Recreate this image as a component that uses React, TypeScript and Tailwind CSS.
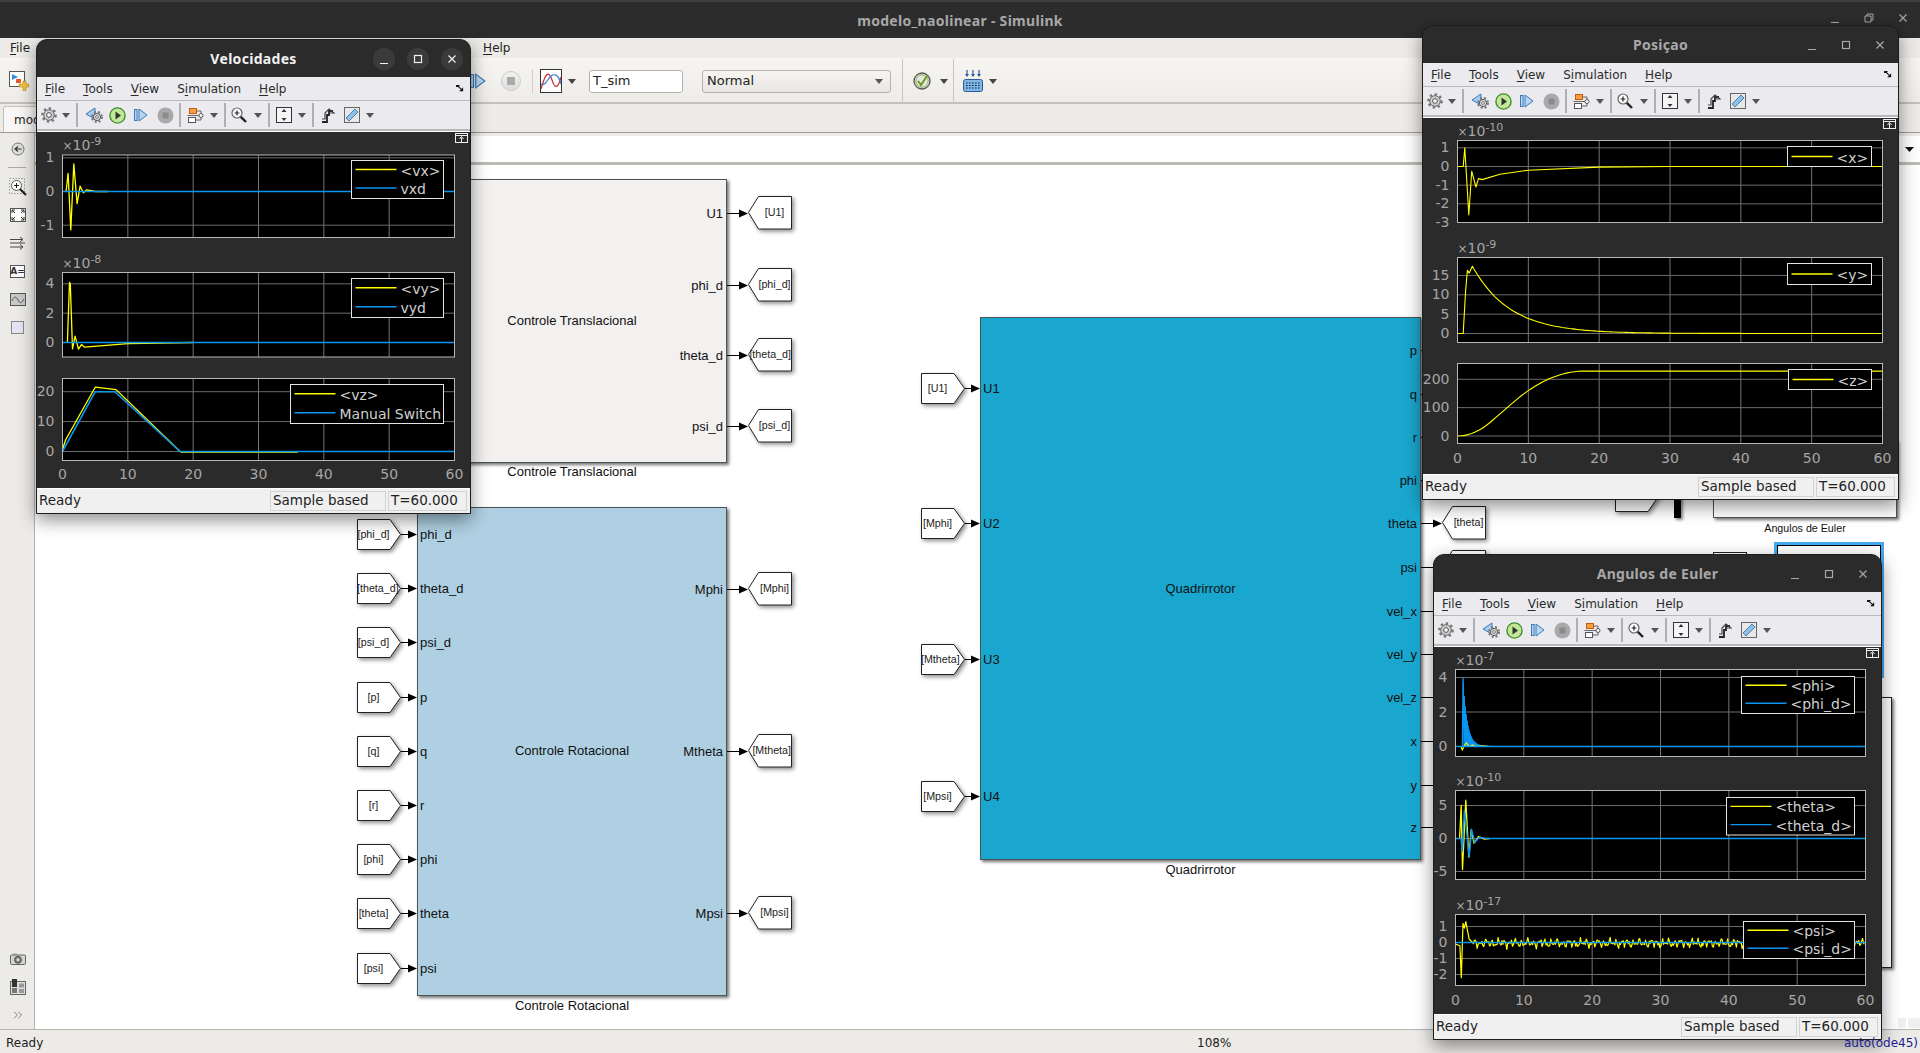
import React from "react";
import { ChevronsRight } from "lucide-react";

type Pt = [number, number];
type Series = { color: string; pts: Pt[]; w?: number };
type Legend = { x: number; y: number; w: number; h: number; lineW: number; labels: string[] };
type Axes = {
  top: number;
  bottom: number;
  y0: number;
  k: number;
  ticks: number[];
  exp?: string;
  series: Series[];
  legend: Legend;
};

const Y = "#ffff00";
const B = "#0a96f0";
const flat: Pt[] = [[0, 0], [60, 0]];

// ---------- curve data ----------
const range = (a: number, b: number, s: number) => {
  const out: number[] = [];
  for (let t = a; t <= b; t += s) out.push(t);
  return out;
};

const posY: Pt[] = [
  [0, 0], [0.8, 0], [1.15, 11], [1.4, 16.3], [1.65, 15.6], [2.1, 17.4],
  ...range(2.3, 60, 0.5).map((t): Pt => [t, 17.4 * Math.exp(-(t - 2.1) / 5.27)])
];

const posZ: Pt[] = range(0, 60, 0.5).map((t): Pt => {
  let v = 229;
  if (t <= 5) v = 2.26 * t * t;
  else if (t <= 8) v = 56.5 + 21.6 * (t - 5);
  else if (t <= 18) v = 121.3 + 21.6 * (t - 8) - 1.08 * (t - 8) * (t - 8);
  return [t, v];
});

const phiD: Pt[] = [
  [0, 0], [1, 0], [1.1, 4],
  ...range(1.16, 5.6, 0.07).map((t, i): Pt => [t, i % 2 ? 0 : 4 * Math.exp(-(t - 1.1) / 0.62)]),
  [6, 0]
];

const psiNoise: Pt[] = [
  [0, -0.1], [0.65, -0.2], [0.85, -2.2], [1, -0.2], [1.1, 1.2], [1.3, 0.9], [1.5, 1.3], [2, 0.2], [2.5, 0],
  ...range(2.6, 60, 0.14).map((t): Pt => [
    t,
    0.14 * Math.sin(t * 7.3) + 0.12 * Math.sin(t * 13.1 + 1) + 0.08 * Math.sin(t * 23 + 2) + 0.07 * Math.sin(t * 3.1) - 0.04
  ])
];

// ---------- scope plots ----------
const Plot = ({ a, left, right }: { a: Axes; left: number; right: number }) => {
  const sx = (t: number) => left + (t / 60) * (right - left);
  const sy = (v: number) => a.y0 - v * a.k;
  const l = a.legend;
  return (
    <g>
      <rect x={left} y={a.top} width={right - left} height={a.bottom - a.top} fill="#000" />
      {[10, 20, 30, 40, 50].map(t => (
        <line key={t} x1={sx(t)} x2={sx(t)} y1={a.top} y2={a.bottom} stroke="#747474" />
      ))}
      {a.ticks.map(v => (
        <g key={v}>
          <line x1={left} x2={right} y1={sy(v)} y2={sy(v)} stroke="#6c6c6c" />
          <text x={left - 8} y={sy(v) + 4.5} textAnchor="end" fontSize={14} className="fill-[#a6a6a6]">{v}</text>
        </g>
      ))}
      {a.series.map((s, i) => (
        <polyline
          key={i}
          points={s.pts.map(([t, v]) => `${sx(t).toFixed(1)},${sy(v).toFixed(1)}`).join(" ")}
          fill="none"
          stroke={s.color}
          strokeWidth={s.w ?? 1.3}
          strokeLinejoin="round"
        />
      ))}
      <rect x={left} y={a.top} width={right - left} height={a.bottom - a.top} fill="none" stroke="#b8b8b8" />
      {a.exp && (
        <text x={left} y={a.top - 5} fontSize={14} className="fill-[#a6a6a6]">
          <tspan fontSize={12}>×</tspan>10<tspan dy={-5} fontSize={11}>{a.exp}</tspan>
        </text>
      )}
      <rect x={l.x} y={l.y} width={l.w} height={l.h} fill="#000" stroke="#e4e4e4" />
      {l.labels.map((t, i) => {
        const rowH = l.h / l.labels.length;
        const cy = l.y + rowH * (i + 0.5) - (l.labels.length > 1 ? (i === 0 ? 0.5 : 1) : 0);
        return (
          <g key={t}>
            <line x1={l.x + 4} x2={l.x + 4 + l.lineW} y1={cy} y2={cy} stroke={i ? B : Y} strokeWidth={1.3} />
            <text x={l.x + 4 + l.lineW + 4} y={cy + 6} fontSize={14} className="fill-[#cfcfcf]">{t}</text>
          </g>
        );
      })}
    </g>
  );
};

// ---------- small icons ----------
const Caret = ({ dark }: { dark?: boolean }) => (
  <svg width="8" height="5" viewBox="0 0 8 5" className="shrink-0">
    <polygon points="0,0 8,0 4,5" fill={dark ? "#444" : "#555"} />
  </svg>
);

const GearIco = () => (
  <svg width="16" height="16" viewBox="0 0 16 16">
    <circle cx="8" cy="8" r="6.6" fill="none" stroke="#777" strokeWidth="2.4" strokeDasharray="2.4 2.7" />
    <circle cx="8" cy="8" r="5.3" fill="#cfcfcf" stroke="#666" />
    <circle cx="8" cy="8" r="2.4" fill="#f5f5f5" stroke="#555" />
  </svg>
);
const BackGearIco = () => (
  <svg width="18" height="16" viewBox="0 0 18 16">
    <polygon points="1,7 10,1 10,12" fill="#a8cdf0" stroke="#3a78b8" />
    <circle cx="12" cy="10" r="5" fill="none" stroke="#777" strokeWidth="2" strokeDasharray="2 2" />
    <circle cx="12" cy="10" r="3.6" fill="#ddd" stroke="#555" />
    <circle cx="12" cy="10" r="1.4" fill="#fff" stroke="#444" strokeWidth=".7" />
  </svg>
);
const PlayIco = () => (
  <svg width="17" height="17" viewBox="0 0 17 17">
    <circle cx="8.5" cy="8.5" r="7.6" fill="#c4e69a" stroke="#3f8f2a" strokeWidth="1.4" />
    <polygon points="6.5,4.6 12,8.5 6.5,12.4" fill="#2a3a2a" />
  </svg>
);
const StepIco = () => (
  <svg width="14" height="14" viewBox="0 0 14 14">
    <rect x="0.5" y="1.5" width="2.6" height="11" fill="#b6d6f2" stroke="#3a78b8" />
    <polygon points="5,1 13,7 5,13" fill="#b6d6f2" stroke="#3a78b8" />
  </svg>
);
const StopIco = () => (
  <svg width="17" height="17" viewBox="0 0 17 17">
    <circle cx="8.5" cy="8.5" r="8" fill="#a9a9a9" />
    <rect x="5.5" y="5.5" width="6" height="6" fill="#8b8b8b" />
  </svg>
);
const BlockIco = () => (
  <svg width="17" height="15" viewBox="0 0 17 15">
    <rect x="2.5" y="0.5" width="7" height="5" fill="#f5a040" stroke="#c85a10" />
    <rect x="1.5" y="9.5" width="7" height="5" fill="#fff" stroke="#555" />
    <circle cx="14" cy="7.5" r="2" fill="#fff" stroke="#555" />
    <path d="M9.5 3 H14 V5.5 M12 7.5 H0.5 M8.5 12 H14 V9.5" fill="none" stroke="#666" />
  </svg>
);
const ZoomIco = () => (
  <svg width="16" height="16" viewBox="0 0 16 16">
    <circle cx="6" cy="6" r="5" fill="#fff" stroke="#666" strokeWidth="1.2" />
    <path d="M3.6 6 H8.4 M6 3.6 V8.4" stroke="#222" strokeWidth="1.2" />
    <path d="M9.8 9.8 L15 15" stroke="#222" strokeWidth="2.4" />
  </svg>
);
const AutoIco = () => (
  <svg width="16" height="16" viewBox="0 0 16 16">
    <rect x="0.5" y="0.5" width="15" height="15" fill="#f4f4f4" stroke="#333" />
    <path d="M8 2 L5.5 5 H10.5 Z M8 14 L5.5 11 H10.5 Z" fill="#333" />
  </svg>
);
const StyleIco = () => (
  <svg width="14" height="15" viewBox="0 0 14 15">
    <path d="M1 14 H6 V7 L8 7 V3 H12" fill="none" stroke="#222" strokeWidth="1.8" />
    <path d="M1 11 H4 V5 L8 1 L13 5 H9" fill="none" stroke="#444" strokeWidth="1.2" />
  </svg>
);
const RulerIco = () => (
  <svg width="16" height="16" viewBox="0 0 16 16">
    <rect x="0.5" y="0.5" width="15" height="15" fill="#e8e8e8" stroke="#666" />
    <path d="M2 11 L11 2 L14 5 L5 14 Z" fill="#8fc0e8" stroke="#4a80b0" />
  </svg>
);
const DockIco = () => (
  <svg width="8" height="7" viewBox="0 0 10 9">
    <path d="M0 2 L1 0 H4 L3 2 Z M2 1 L8 7" stroke="#111" strokeWidth="1.4" fill="#111" />
    <path d="M9 3 V8 H4 Z" fill="#111" />
  </svg>
);

const VSep = () => <div className="h-[24px] w-[2px] shrink-0 bg-[#b0b0b4]" />;

const ScopeToolbar = () => (
  <div className="flex h-[30px] shrink-0 items-center border-b-2 border-[#b9b9bd] bg-[#eaeaef] [&>div]:flex [&>div]:shrink-0 [&>div]:justify-center">
    <div className="w-[23px]"><GearIco /></div>
    <div className="w-[12px]"><Caret /></div>
    <div className="w-[9px]"><VSep /></div>
    <div className="w-[26px]"><BackGearIco /></div>
    <div className="w-[20px]"><PlayIco /></div>
    <div className="w-[28px]"><StepIco /></div>
    <div className="w-[20px]"><StopIco /></div>
    <div className="w-[10px]"><VSep /></div>
    <div className="w-[20px]"><BlockIco /></div>
    <div className="w-[18px]"><Caret /></div>
    <div className="w-[3px]"><VSep /></div>
    <div className="w-[26px]"><ZoomIco /></div>
    <div className="w-[12px]"><Caret /></div>
    <div className="w-[9px]"><VSep /></div>
    <div className="w-[22px]"><AutoIco /></div>
    <div className="w-[14px]"><Caret /></div>
    <div className="w-[7px]"><VSep /></div>
    <div className="w-[24px]"><StyleIco /></div>
    <div className="w-[24px]"><RulerIco /></div>
    <div className="w-[12px]"><Caret /></div>
  </div>
);

const Mn = ({ c, rest, pre }: { c: string; rest: string; pre?: string }) => (
  <span>{pre}<span className="underline underline-offset-2">{c}</span>{rest}</span>
);

const WinButtons = ({ active }: { active?: boolean }) => {
  const stroke = active ? "#f0f0f0" : "#a8a8a8";
  const cls = active
    ? "flex h-[22px] w-[22px] items-center justify-center rounded-full bg-[#3b3b3b]"
    : "flex h-[22px] w-[22px] items-center justify-center";
  return (
    <div className="absolute right-[7px] top-[8px] flex gap-[12px]">
      <div className={cls}>
        <svg width="10" height="10" viewBox="0 0 10 10"><path d="M1 9.5 H9" stroke={stroke} strokeWidth="1.2" /></svg>
      </div>
      <div className={cls}>
        <svg width="10" height="10" viewBox="0 0 10 10"><rect x="1.5" y="1.5" width="7" height="7" fill="none" stroke={stroke} strokeWidth="1.2" /></svg>
      </div>
      <div className={cls}>
        <svg width="10" height="10" viewBox="0 0 10 10"><path d="M1.5 1.5 L8.5 8.5 M8.5 1.5 L1.5 8.5" stroke={stroke} strokeWidth="1.2" /></svg>
      </div>
    </div>
  );
};

const ScopeWindow = ({ title, x, y, w, h, active, left, right, axes, tickY }: {
  title: string; x: number; y: number; w: number; h: number; active?: boolean;
  left: number; right: number; axes: Axes[]; tickY: number;
}) => {
  const plotTop = y + 93;
  const plotH = h - 93 - 26;
  return (
    <div
      className="absolute z-10 flex flex-col overflow-hidden rounded-t-[11px] border border-[#1c1c1c] bg-[#2b2b2b] font-['DejaVu_Sans',sans-serif] shadow-[0_6px_18px_rgba(0,0,0,0.45)]"
      style={{ left: x, top: y, width: w, height: h }}
    >
      <div className="relative flex h-[37px] shrink-0 items-center justify-center">
        <span className={`font-['Noto_Sans',sans-serif] text-[14px] font-bold tracking-[0.3px] ${active ? "text-[#f2f2f2]" : "text-[#a8a8a8]"}`}>{title}</span>
        <WinButtons active={active} />
      </div>
      <div className="flex h-[24px] shrink-0 items-center gap-[18px] border-b border-[#b9b9bd] bg-[#eaeaef] px-[8px] text-[12px] text-[#2a2a2a]">
        <Mn c="F" rest="ile" />
        <Mn c="T" rest="ools" />
        <Mn c="V" rest="iew" />
        <Mn pre="S" c="i" rest="mulation" />
        <Mn c="H" rest="elp" />
        <div className="ml-auto mr-[-2px]"><DockIco /></div>
      </div>
      <ScopeToolbar />
      <div className="h-[1px] shrink-0 bg-white" />
      <svg
        width={w - 2}
        height={plotH}
        viewBox={`${x + 1} ${plotTop} ${w - 2} ${plotH}`}
        className="shrink-0 font-['DejaVu_Sans',sans-serif]"
      >
        {axes.map((a, i) => <Plot key={i} a={a} left={left} right={right} />)}
        {[0, 10, 20, 30, 40, 50, 60].map(t => (
          <text
            key={t}
            x={left + (t / 60) * (right - left)}
            y={tickY + 5}
            textAnchor="middle"
            fontSize={14}
            className="fill-[#a6a6a6]"
          >{t}</text>
        ))}
        <g transform={`translate(${x + w - 16} ${plotTop + 1})`}>
          <rect x="0.5" y="0.5" width="12" height="9" fill="none" stroke="#eee" />
          <path d="M0.5 2.5 H12.5 M6.5 9 V4.5 M4.5 6 L6.5 3.5 L8.5 6" fill="none" stroke="#eee" />
        </g>
      </svg>
      <div className="flex min-h-0 flex-1 items-center justify-between border-t border-white bg-[#f0f0f0] pl-[2px] pr-[3px] text-[13.5px] text-[#222]">
        <span className="pb-[2px]">Ready</span>
        <div className="flex gap-[2px]">
          <div className="flex h-[20px] w-[116px] items-center border border-[#d2d2d2] pb-[2px] pl-[2px]">Sample based</div>
          <div className="flex h-[20px] w-[79px] items-center border border-[#d2d2d2] pb-[2px] pl-[2px]">T=60.000</div>
        </div>
      </div>
    </div>
  );
};

// ---------- diagram ----------
const OX = 35;
const OY = 165;

const Block = ({ x, y, w, h, color, name, nameY, inPorts = [], outPorts = [], label, labelY, small }: {
  x: number; y: number; w: number; h: number; color: string; name: string; nameY: number;
  inPorts?: [string, number][]; outPorts?: [string, number][]; label: string; labelY: number; small?: boolean;
}) => (
  <>
    <div
      className="absolute border border-[#4b5558] text-[13px] text-[#111] shadow-[2px_2px_3px_rgba(0,0,0,0.55)]"
      style={{ left: x - OX, top: y - OY, width: w, height: h, backgroundColor: color }}
    >
      <span className="absolute left-0 right-0 text-center leading-[16px]" style={{ top: nameY - y - 8 }}>{name}</span>
      {inPorts.map(([t, py]) => (
        <span key={t} className="absolute left-[2px] leading-[16px]" style={{ top: py - y - 8 }}>{t}</span>
      ))}
      {outPorts.map(([t, py]) => (
        <span key={t} className="absolute right-[3px] leading-[16px]" style={{ top: py - y - 8 }}>{t}</span>
      ))}
    </div>
    <span
      className={`absolute text-center leading-[16px] text-[#111] ${small ? "text-[10.7px]" : "text-[13px]"}`}
      style={{ left: x - OX, top: labelY - OY - 8, width: w }}
    >{label}</span>
  </>
);

const TagIn = ({ x, cy, text }: { x: number; cy: number; text: string }) => (
  <div className="absolute h-[31px] w-[44px]" style={{ left: x - OX, top: cy - OY - 15 }}>
    <svg width="46" height="33" viewBox="0 0 46 33" className="absolute left-0 top-0 drop-shadow-[2px_2px_2px_rgba(0,0,0,0.45)]">
      <polygon points="0.5,0.5 33,0.5 43.5,15.5 33,30.5 0.5,30.5" fill="#fff" stroke="#222" />
    </svg>
    <span className="absolute left-0 top-0 flex h-[30px] w-[33px] items-center whitespace-nowrap text-[10.7px] text-[#222] [justify-content:safe_center]">{text}</span>
  </div>
);

const TagOut = ({ x, cy, text }: { x: number; cy: number; text: string }) => (
  <div className="absolute h-[33px] w-[44px]" style={{ left: x - OX, top: cy - OY - 17 }}>
    <svg width="46" height="35" viewBox="0 0 46 35" className="absolute left-0 top-0 drop-shadow-[2px_2px_2px_rgba(0,0,0,0.45)]">
      <polygon points="0.5,16.5 10.5,0.5 43.5,0.5 43.5,33 10.5,33" fill="#fff" stroke="#222" />
    </svg>
    <span className={`absolute left-[10px] top-0 flex h-[32px] w-[33px] items-center whitespace-nowrap text-[10.7px] text-[#222] ${text.length > 7 ? "justify-end" : "justify-center"}`}>{text}</span>
  </div>
);

const rotY = [534, 588, 642, 697, 751, 805, 859, 913, 968];
const rotIn = ["phi_d", "theta_d", "psi_d", "p", "q", "r", "phi", "theta", "psi"];
const transOut: [string, string, number][] = [["U1", "[U1]", 213], ["phi_d", "[phi_d]", 285], ["theta_d", "[theta_d]", 355], ["psi_d", "[psi_d]", 426]];
const rotOut: [string, string, number][] = [["Mphi", "[Mphi]", 589], ["Mtheta", "[Mtheta]", 751], ["Mpsi", "[Mpsi]", 913]];
const quadIn: [string, string, number][] = [["U1", "[U1]", 388], ["U2", "[Mphi]", 523], ["U3", "[Mtheta]", 659], ["U4", "[Mpsi]", 796]];
const quadOut: [string, number][] = [["p", 350], ["q", 394], ["r", 437], ["phi", 480], ["theta", 523], ["psi", 567], ["vel_x", 611], ["vel_y", 654], ["vel_z", 697], ["x", 741], ["y", 785], ["z", 827]];

const Wire = ({ x1, x2, y }: { x1: number; x2: number; y: number }) => (
  <g>
    <line x1={x1} x2={x2 - 6} y1={y + 0.5} y2={y + 0.5} stroke="#000" />
    <polygon points={`${x2 - 9},${y - 3.5} ${x2},${y + 0.5} ${x2 - 9},${y + 4.5}`} fill="#000" />
  </g>
);

const Diagram = () => (
  <div className="relative min-h-0 flex-1 overflow-hidden bg-white font-['Liberation_Sans',sans-serif]">
    <svg width="1885" height="864" viewBox={`${OX} ${OY} 1885 864`} className="absolute left-0 top-0">
      {rotY.map(y => <Wire key={y} x1={401} x2={417} y={y} />)}
      {transOut.map(([, , y]) => <Wire key={y} x1={727} x2={748} y={y} />)}
      {rotOut.map(([, , y]) => <Wire key={y} x1={727} x2={748} y={y} />)}
      {quadIn.map(([, , y]) => <Wire key={y} x1={963} x2={980} y={y} />)}
      <Wire x1={1421} x2={1442} y={523} />
      {quadOut.filter(([t]) => t !== "theta").map(([t, y]) => (
        <line key={t} x1={1421} x2={1436} y1={y + 0.5} y2={y + 0.5} stroke="#000" />
      ))}
      <Wire x1={1421} x2={1442} y={567} />
    </svg>

    <Block
      x={417} y={179} w={310} h={284} color="#f3f0f0"
      name="Controle Translacional" nameY={320}
      outPorts={transOut.map(([t, , y]): [string, number] => [t, y])}
      label="Controle Translacional" labelY={472}
    />
    {transOut.map(([, t, y]) => <TagOut key={t} x={748} cy={y} text={t} />)}

    <Block
      x={417} y={507} w={310} h={489} color="#aed0e2"
      name="Controle Rotacional" nameY={750}
      inPorts={rotIn.map((t, i): [string, number] => [t, rotY[i]])}
      outPorts={rotOut.map(([t, , y]): [string, number] => [t, y])}
      label="Controle Rotacional" labelY={1006}
    />
    {rotIn.map((t, i) => <TagIn key={t} x={357} cy={rotY[i]} text={`[${t}]`} />)}
    {rotOut.map(([, t, y]) => <TagOut key={t} x={748} cy={y} text={t} />)}

    <Block
      x={980} y={317} w={441} h={543} color="#1aa7cf"
      name="Quadrirrotor" nameY={588}
      inPorts={quadIn.map(([t, , y]): [string, number] => [t, y])}
      outPorts={quadOut}
      label="Quadrirrotor" labelY={870}
    />
    {quadIn.map(([, t, y]) => <TagIn key={t} x={921} cy={y} text={t} />)}
    <TagOut x={1442} cy={523} text="[theta]" />
    <TagOut x={1442} cy={567} text="[psi]" />

    {/* blocks peeking out from behind the scopes */}
    <TagIn x={1615} cy={496} text="" />
    <div className="absolute left-[1639px] top-[310px] h-[43px] w-[7px] bg-black shadow-[2px_2px_3px_rgba(0,0,0,0.45)]" />
    <Block x={1713} y={440} w={184} h={78} color="#fff" name="" nameY={470} label="Angulos de Euler" labelY={528} small />
    <div className="absolute left-[1678px] top-[387px] h-[40px] w-[34px] border border-[#222] bg-white" />
    <div className="absolute left-[1739px] top-[377px] h-[136px] w-[110px] border-[3px] border-[#45aaf2] bg-white outline outline-1 -outline-offset-4 outline-black" />
    <div className="absolute left-[1650px] top-[532px] h-[271px] w-[207px] border border-[#222] bg-white shadow-[2px_2px_3px_rgba(0,0,0,0.55)]" />
    <div className="absolute bottom-[1px] right-0 flex gap-[2px]">
      <div className="h-[10px] w-[8px] bg-[#efefef]" />
      <div className="h-[10px] w-[12px] bg-[#efefef]" />
    </div>
  </div>
);

// ---------- main window chrome ----------
const PalIcon = ({ children }: { children: React.ReactNode }) => (
  <div className="flex h-[28px] w-[35px] items-center justify-center">{children}</div>
);

const Palette = () => (
  <div className="flex w-[35px] shrink-0 flex-col border-r border-[#b5b3ae] bg-[#edebe7] pt-[2px]">
    <PalIcon>
      <svg width="14" height="14" viewBox="0 0 14 14">
        <circle cx="7" cy="7" r="6" fill="#ddd" stroke="#777" />
        <path d="M10.5 7 H5 M7 4.5 L4 7 L7 9.5" fill="none" stroke="#333" strokeWidth="1.2" />
      </svg>
    </PalIcon>
    <div className="h-[10px] pt-[4px]"><div className="mx-[8px] h-[1px] bg-[#a8a8a8]" /></div>
    <PalIcon>
      <svg width="18" height="18" viewBox="0 0 18 18">
        <rect x="0.5" y="0.5" width="15" height="15" fill="none" stroke="#999" strokeDasharray="1.5 1.5" />
        <circle cx="7.5" cy="7.5" r="5" fill="#fff" stroke="#555" />
        <path d="M5 7.5 H10 M7.5 5 V10" stroke="#222" />
        <path d="M11 11 L17 17" stroke="#222" strokeWidth="2.2" />
      </svg>
    </PalIcon>
    <PalIcon>
      <svg width="16" height="14" viewBox="0 0 16 14">
        <rect x="0.5" y="0.5" width="15" height="13" fill="#fff" stroke="#555" />
        <path d="M2 2 L5 5 M2 2 V5 M2 2 H5 M14 2 L11 5 M14 2 V5 M14 2 H11 M2 12 L5 9 M2 12 V9 M2 12 H5 M14 12 L11 9 M14 12 V9 M14 12 H11" stroke="#333" fill="none" />
      </svg>
    </PalIcon>
    <PalIcon>
      <svg width="16" height="14" viewBox="0 0 16 14">
        <path d="M0 3.5 H12 M0 7 H15 M0 11 H12 M10 1 L13 3.5 L10 6 M10 8.5 L13 11 L10 13.5" fill="none" stroke="#444" />
      </svg>
    </PalIcon>
    <PalIcon>
      <div className="flex h-[13px] w-[15px] items-center justify-center border border-[#555] bg-white font-['DejaVu_Sans',sans-serif] text-[9px] font-bold leading-none text-[#333]">A=</div>
    </PalIcon>
    <PalIcon>
      <svg width="16" height="13" viewBox="0 0 16 13">
        <rect x="0.5" y="0.5" width="15" height="12" fill="#c8c8c8" stroke="#555" />
        <path d="M2 8 C4 3 6 3 8 7 S12 10 14 6" fill="none" stroke="#555" />
      </svg>
    </PalIcon>
    <PalIcon>
      <div className="h-[13px] w-[13px] border border-[#888] bg-[#e4e4f2]" />
    </PalIcon>
    <div className="mt-auto" />
    <PalIcon>
      <svg width="16" height="12" viewBox="0 0 16 12">
        <rect x="0.5" y="2" width="15" height="9.5" rx="1" fill="#d4d4d4" stroke="#666" />
        <rect x="3" y="0.5" width="4" height="2" fill="#999" />
        <circle cx="8" cy="6.8" r="3.4" fill="#888" stroke="#444" />
        <circle cx="8" cy="6.8" r="1.4" fill="#ddd" />
      </svg>
    </PalIcon>
    <PalIcon>
      <svg width="16" height="16" viewBox="0 0 16 16">
        <rect x="0.5" y="2.5" width="15" height="13" fill="#ddd" stroke="#666" />
        <rect x="2" y="0" width="5" height="8" fill="#333" />
        <rect x="2" y="9" width="5" height="5" fill="#777" />
        <rect x="9" y="4.5" width="5" height="4" fill="#999" />
        <rect x="9" y="10" width="5" height="4" fill="#999" />
      </svg>
    </PalIcon>
    <PalIcon><ChevronsRight size={14} strokeWidth={1.2} color="#555" /></PalIcon>
  </div>
);

const MainToolbar = () => (
  <div className="flex h-[46px] shrink-0 items-center border-b-2 border-[#c4c1bb] bg-gradient-to-b from-[#f7f5f1] to-[#eeece8] pl-[9px] pt-[2px]">
    <svg width="20" height="20" viewBox="0 0 20 20" className="shrink-0">
      <rect x="0.5" y="0.5" width="15" height="15" fill="#fff" stroke="#555" />
      <polygon points="3,3 9,6 3,9" fill="#3a90d8" />
      <rect x="7" y="8" width="5" height="4" fill="#e85a30" />
      <path d="M14 10 H17 V13 H20 V16 H17 V20 H14 V16 H10 V13 H14 Z" fill="#f2c440" stroke="#b88a20" strokeWidth=".6" />
    </svg>
    <div className="ml-[441px]"><svg width="16" height="16" viewBox="0 0 14 14" className="block"><rect x="0.5" y="1.5" width="2.6" height="11" fill="#b6d6f2" stroke="#3a78b8" /><polygon points="5,1 13,7 5,13" fill="#b6d6f2" stroke="#3a78b8" /></svg></div>
    <div className="ml-[15px] h-[20px] w-[20px] rounded-full border border-[#ccc] bg-gradient-to-b from-[#f2f2f2] to-[#ddd] p-[5px]"><div className="h-full w-full bg-[#aaa]" /></div>
    <div className="ml-[11px] h-[24px] w-[1px] bg-[#d0cec9]" />
    <svg width="22" height="24" viewBox="0 0 22 24" className="ml-[7px] shrink-0">
      <rect x="0.5" y="0.5" width="21" height="23" fill="#fff" stroke="#333" />
      <path d="M1 20 C6 2 9 2 12 11 S18 20 21 8" fill="none" stroke="#c83030" strokeWidth="1.2" />
      <path d="M1 15 C5 18 8 9 11 7 S18 4 21 15" fill="none" stroke="#3a78c8" strokeWidth="1.2" />
    </svg>
    <div className="ml-[6px]"><Caret dark /></div>
    <div className="ml-[13px] flex h-[23px] w-[94px] items-center rounded-[3px] border border-[#b5b3ae] bg-white pl-[3px] text-[13px] text-[#222]">T_sim</div>
    <div className="ml-[19px] flex h-[23px] w-[189px] items-center justify-between rounded-[3px] border border-[#b5b3ae] bg-gradient-to-b from-[#f6f5f2] to-[#e8e6e2] pl-[4px] pr-[7px] text-[13px] text-[#222]">
      Normal
      <Caret />
    </div>
    <div className="ml-[11px] h-[44px] w-[1px] bg-[#c9c6c1]" />
    <svg width="18" height="20" viewBox="0 0 18 20" className="ml-[10px] shrink-0">
      <circle cx="9" cy="10" r="8" fill="#e6e6e0" stroke="#555" strokeWidth="1.3" />
      <circle cx="9" cy="10" r="6.2" fill="none" stroke="#8cb050" />
      <path d="M5 10 L8 14 L14 5" fill="none" stroke="#6a9a20" strokeWidth="2" />
    </svg>
    <div className="ml-[9px]"><Caret dark /></div>
    <div className="ml-[5px] h-[44px] w-[1px] bg-[#c9c6c1]" />
    <svg width="20" height="22" viewBox="0 0 20 22" className="ml-[9px] shrink-0">
      <path d="M4 0 V5 M10 0 V5 M16 0 V5" stroke="#2a5a9a" strokeWidth="1.2" />
      <path d="M2 4 L4 7 L6 4 Z M8 4 L10 7 L12 4 Z M14 4 L16 7 L18 4 Z" fill="#2a5a9a" />
      <rect x="0.5" y="9.5" width="19" height="12" rx="2" fill="#7fb8e8" stroke="#2a5a9a" />
      <path d="M3 13 H17 M3 15.5 H17 M3 18 H17" stroke="#123" strokeWidth="1.2" strokeDasharray="1.6 1.4" />
    </svg>
    <div className="ml-[6px]"><Caret dark /></div>
  </div>
);

const velAxes: Axes[] = [
  {
    top: 155, bottom: 237.5, y0: 191.5, k: 33.7, ticks: [1, 0, -1], exp: "-9",
    series: [
      {
        color: Y,
        pts: [[0.55, 0], [0.86, 0.54], [1.27, -1.14], [1.73, 0.82], [2.24, -0.36], [2.7, 0.16], [3.2, -0.04], [3.7, 0.05], [5, 0], [7, 0]]
      },
      { color: B, pts: flat, w: 1.6 }
    ],
    legend: { x: 351.5, y: 160.5, w: 92, h: 38, lineW: 41, labels: ["<vx>", "vxd"] }
  },
  {
    top: 272.5, bottom: 357, y0: 342.5, k: 14.67, ticks: [4, 2, 0], exp: "-8",
    series: [
      {
        color: Y,
        pts: [[0.75, 0], [1.07, 4.1], [1.2, 4], [1.53, -0.43], [1.93, 0.43], [2.45, -0.45], [2.9, -0.14], [3.4, -0.32], [10, -0.08], [20, 0]]
      },
      { color: B, pts: flat, w: 1.6 }
    ],
    legend: { x: 351.5, y: 278.5, w: 92, h: 39, lineW: 41, labels: ["<vy>", "vyd"] }
  },
  {
    top: 378.5, bottom: 460.5, y0: 451.5, k: 2.99, ticks: [20, 10, 0],
    series: [
      { color: Y, pts: [[0, 0], [0.2, 2], [0.5, 4], [5, 21.5], [8.2, 20.7], [18, 0], [18.2, -0.25], [36, -0.25]] },
      { color: B, pts: [[0, 0], [5, 20], [8, 20], [18, 0], [60, 0]], w: 1.6 }
    ],
    legend: { x: 290.5, y: 384.5, w: 153, h: 39, lineW: 41, labels: ["<vz>", "Manual Switch"] }
  }
];

const posAxes: Axes[] = [
  {
    top: 140.5, bottom: 222.5, y0: 166.5, k: 18.67, ticks: [1, 0, -1, -2, -3], exp: "-10",
    series: [{
      color: Y, w: 1.1,
      pts: [[0, 0], [0.8, 0], [1.03, 1], [1.6, -2.6], [2, -0.25], [2.6, -1.1], [2.96, -0.65], [3.47, -0.7], [6, -0.42], [10, -0.2], [20, -0.03], [30, 0], [60, 0]]
    }],
    legend: { x: 1787.5, y: 146.5, w: 84, h: 20, lineW: 41, labels: ["<x>"] }
  },
  {
    top: 257.5, bottom: 342.5, y0: 333.5, k: 3.87, ticks: [15, 10, 5, 0], exp: "-9",
    series: [{ color: Y, w: 1.1, pts: posY }],
    legend: { x: 1787.5, y: 263.5, w: 84, h: 21, lineW: 41, labels: ["<y>"] }
  },
  {
    top: 363.5, bottom: 443.5, y0: 436, k: 0.2835, ticks: [200, 100, 0],
    series: [{ color: Y, w: 1.1, pts: posZ }],
    legend: { x: 1788.5, y: 369.5, w: 83, h: 20, lineW: 41, labels: ["<z>"] }
  }
];

const eulerAxes: Axes[] = [
  {
    top: 669.5, bottom: 756.5, y0: 746.5, k: 17.25, ticks: [4, 2, 0], exp: "-7",
    series: [
      { color: B, pts: phiD, w: 1.2 },
      { color: Y, pts: [[0.8, 0], [1, -0.2], [1.3, 0.05], [1.6, 0.2], [2, 0], [2.5, 0.08], [3, 0], [4, 0.04], [5, 0]], w: 1.2 },
      { color: B, pts: flat, w: 1.4 }
    ],
    legend: { x: 1741.5, y: 676.5, w: 113, h: 37, lineW: 41, labels: ["<phi>", "<phi_d>"] }
  },
  {
    top: 790.5, bottom: 879.5, y0: 838.5, k: 6.6, ticks: [5, 0, -5], exp: "-10",
    series: [
      {
        color: Y,
        pts: [[0.6, 0], [0.83, 5], [1.02, -4.7], [1.5, 5.8], [1.95, -2.8], [2.3, 1.3], [2.7, -0.7], [3.4, 0.3], [4.2, -0.1], [5, 0]]
      },
      {
        color: B,
        pts: [[0, 0], [0.8, 0], [1, -2], [1.3, 4.3], [2, -2.8], [2.35, 1.4], [2.8, -0.6], [3.5, 0.2], [4.5, 0], [60, 0]],
        w: 1.4
      }
    ],
    legend: { x: 1726.5, y: 797.5, w: 128, h: 37.5, lineW: 41, labels: ["<theta>", "<theta_d>"] }
  },
  {
    top: 914.5, bottom: 985.5, y0: 942.5, k: 16, ticks: [1, 0, -1, -2], exp: "-17",
    series: [
      { color: Y, pts: psiNoise, w: 1.2 },
      { color: B, pts: flat, w: 1.4 }
    ],
    legend: { x: 1743.5, y: 921.5, w: 111, h: 37, lineW: 41, labels: ["<psi>", "<psi_d>"] }
  }
];

export default function App() {
  return (
    <div className="relative h-[1053px] w-[1920px] overflow-hidden bg-[#edebe7] font-['DejaVu_Sans',sans-serif]">
      <div className="flex h-full flex-col">
        {/* main simulink window */}
        <div className="relative flex h-[38px] shrink-0 items-center justify-center border-t-2 border-[#3f3f3f] bg-[#2c2c2c]">
          <span className="font-['Noto_Sans',sans-serif] text-[14px] font-bold tracking-[0.3px] text-[#a8a8a8]">modelo_naolinear - Simulink</span>
          <div className="absolute right-[12px] top-[11px] flex gap-[24px]">
            <svg width="10" height="10" viewBox="0 0 10 10"><path d="M1 9.5 H9" stroke="#a8a8a8" strokeWidth="1.2" /></svg>
            <svg width="10" height="10" viewBox="0 0 10 10"><path d="M1 3 H7 V9 H1 Z M3 3 V1 H9 V7 H7" fill="none" stroke="#a8a8a8" /></svg>
            <svg width="10" height="10" viewBox="0 0 10 10"><path d="M1.5 1.5 L8.5 8.5 M8.5 1.5 L1.5 8.5" stroke="#a8a8a8" strokeWidth="1.2" /></svg>
          </div>
        </div>
        <div className="flex h-[20px] shrink-0 items-center bg-[#edebe7] pl-[10px] text-[12px] text-[#222]">
          <Mn c="F" rest="ile" />
          <div className="ml-[453px]"><Mn c="H" rest="elp" /></div>
        </div>
        <MainToolbar />
        <div className="flex h-[29px] shrink-0 items-end border-b border-[#9c9a96] bg-[#edebe7] pl-[3px]">
          <div className="flex h-[26px] items-center rounded-t-[3px] border border-b-0 border-[#c4c1bb] bg-[#f8f7f5] px-[10px] text-[12px] text-[#222]">modelo_naolinear</div>
        </div>
        <div className="flex min-h-0 flex-1">
          <Palette />
          <div className="flex min-w-0 flex-1 flex-col">
            <div className="flex h-[32px] shrink-0 items-center justify-end border-b-[3px] border-[#bdbab5] border-t-[3px] border-t-[#edebe7] bg-white pr-[6px]">
              <svg width="9" height="5" viewBox="0 0 9 5"><polygon points="0,0 9,0 4.5,5" fill="#111" /></svg>
            </div>
            <Diagram />
          </div>
        </div>
        <div className="relative flex h-[24px] shrink-0 items-center border-t border-[#b5b3ae] bg-[#edebe7] pl-[6px] pt-[2px] text-[12px] text-[#222]">
          Ready
          <span className="absolute left-[1197px]">108%</span>
          <span className="absolute right-[2px] z-20 text-[#1c1c90]">auto(ode45)</span>
        </div>
      </div>

      <ScopeWindow title="Velocidades" x={36} y={39} w={435} h={475} active left={62.5} right={454.5} axes={velAxes} tickY={474} />
      <ScopeWindow title="Posiçao" x={1422} y={25} w={477} h={475} left={1457.5} right={1882.5} axes={posAxes} tickY={458} />
      <ScopeWindow title="Angulos de Euler" x={1433} y={554} w={449} h={486} left={1455.5} right={1865.5} axes={eulerAxes} tickY={1000} />
    </div>
  );
}
